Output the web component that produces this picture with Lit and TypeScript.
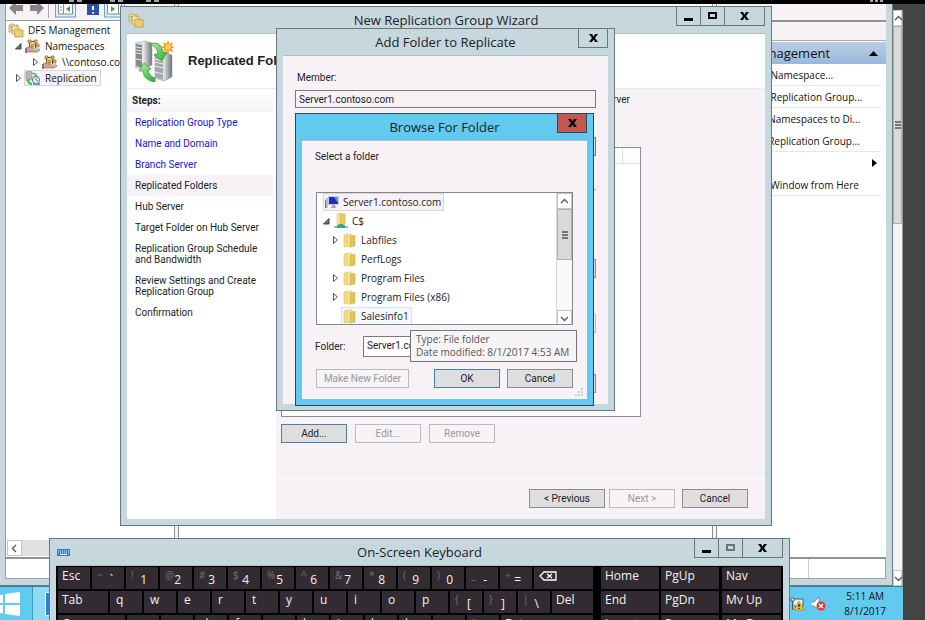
import { LitElement, html, css, nothing } from "lit";
import { customElement, property } from "lit/decorators.js";
import { classMap } from "lit/directives/class-map.js";

/* ---------- icons ---------- */

const folderIcon = html`<svg width="14" height="15" viewBox="0 0 14 15" aria-hidden="true">
  <path d="M1 2 L5 1 L6 2 L6 13 L1 14 Z" fill="#f3dc7c" stroke="#d9c06a" stroke-width=".6"/>
  <path d="M5 2 L8 0.500 L9 2 V12 L6 14.500 L5 13 Z" fill="#fbf0b4" stroke="#dcc468" stroke-width=".6"/>
  <path d="M7 3 L12 2.500 V13 L7 14 Z" fill="#e5c355" stroke="#cfae48" stroke-width=".6"/>
  <rect x="10.500" y="9" width="1.400" height="3" fill="#9fc4a4"/></svg>`;

const driveIcon = html`<svg width="14" height="16" viewBox="0 0 14 16" aria-hidden="true">
  <path d="M3 1 L7 0 V12 L3 12 Z" fill="#f8e9a0" stroke="#d9c06a" stroke-width=".6"/>
  <path d="M6 1 L11 1 V11 L6 12 Z" fill="#e9ca60" stroke="#cfae48" stroke-width=".6"/>
  <rect x="0" y="13" width="14" height="2" fill="#9fb9b0"/>
  <path d="M5 11 h4 v1 h2 v3 h-8 v-3 h2 z" fill="#2fae7c"/></svg>`;

const computerIcon = html`<svg width="14" height="13" viewBox="0 0 14 13" aria-hidden="true">
  <rect x="0" y="4" width="2" height="8" fill="#4c8a5c"/><rect x="1" y="2" width="2" height="9" fill="#b5bcc0"/>
  <rect x="3" y="0" width="11" height="9" fill="#c3ccd8"/><rect x="4" y="1" width="9" height="7" fill="#1c2fb8"/>
  <path d="M9 1 H13 V7 Z" fill="#6f8fe8"/><path d="M7 9 H10 L11 12 H6 Z" fill="#a5aab0"/></svg>`;

const foldersIcon = html`<svg width="16" height="15" viewBox="0 0 16 15" aria-hidden="true">
  <path d="M1 2 L2 1 H5 L6 2 H10 V9 H1 Z" fill="#f2dc90" stroke="#c0a050" stroke-width=".8"/>
  <path d="M4 4 l1 -1 H8 l1 1 H11 V11 H4 Z" fill="#f8ecb8" stroke="#c0a050" stroke-width=".8"/>
  <path d="M6 7 l1 -1 H10 l1 1 H15 V14 H7 Z" fill="#f0cf70" stroke="#b89445" stroke-width=".8"/>
  <path d="M2 4 h3 M3 6 l2 2" stroke="#6fa58a" stroke-width="1"/></svg>`;

const namespaceIcon = html`<svg width="16" height="15" viewBox="0 0 16 15" aria-hidden="true">
  <path d="M3 1 h3 v3 h-3 z M9 1 h3 v3 h-3 z M11 5 h3 v3 h-3 z M6 5 h3 v3 h-3 z" fill="#f0b040" stroke="#9a6a2c" stroke-width=".7"/>
  <path d="M4.500 4 V8 M6 2.500 H9 M10.500 4 V9" stroke="#5d5240" stroke-width="1" fill="none"/>
  <path d="M1 9 l2 -1 h4 l2 2 h5 l1 1 -3 2 H5 L1 13 Z" fill="#dba184" stroke="#9c6a58" stroke-width=".7"/>
  <path d="M0 9 h2 v5 h-2 z" fill="#5c86aa"/>
  <path d="M9 9 h5 v2 h-5 z" fill="#a9cbe6"/></svg>`;

const replicationIcon = html`<svg width="16" height="15" viewBox="0 0 16 15" aria-hidden="true">
  <path d="M1 1 L5 0 L7 1 V8 L3 9 L1 8 Z" fill="#b4b9bd" stroke="#84898d" stroke-width=".7"/>
  <path d="M7 2 Q12 1 12 5 L14 5 L11 8 L8 5 L10 5 Q10 3 7 3 Z" fill="#5cc552"/>
  <path d="M3 8 L6 9 L4 10 Q5 12 7 12 L7 14 Q3 14 2 10 L1 10 Z" fill="#46b848"/>
  <circle cx="11" cy="9" r="3.6" fill="#e4eff8" stroke="#4b6e8c" stroke-width=".9"/>
  <path d="M11 7 v2 l2 1" stroke="#3a5268" fill="none" stroke-width=".8"/>
  <rect x="8" y="12" width="7" height="2" fill="#7c94a6"/></svg>`;

const serversIcon = html`<svg width="40" height="42" viewBox="0 0 40 42" aria-hidden="true">
  <defs><linearGradient id="metal" x1="0" x2="1"><stop offset="0" stop-color="#d3d6d9"/><stop offset=".5" stop-color="#e4e6e8"/><stop offset="1" stop-color="#6e7378"/></linearGradient>
  <linearGradient id="leaf" x1="0" x2="1" y2="1"><stop offset="0" stop-color="#b6ecae"/><stop offset="1" stop-color="#2cae2c"/></linearGradient></defs>
  <path d="M0 3 L10 1 L17 3 V25 L7 30 L0 27 Z" fill="url(#metal)" stroke="#a4a8ac" stroke-width=".6"/>
  <path d="M1 4 L7 5 V28 L1 26 Z" fill="#85898e"/>
  <path d="M1 7 L7 8 M1 10 L7 11 M1 13 L7 14 M1 19 L7 20" stroke="#e6e8ea" stroke-width="1"/>
  <path d="M20 14 L29 12 L37 15 V37 L29 41 L20 38 Z" fill="url(#metal)" stroke="#989ca0" stroke-width=".6"/>
  <path d="M20 15 L28 17 V40 L20 37 Z" fill="#a4a8ac"/>
  <path d="M20 19 L28 21 M20 22 L28 24 M20 26 L28 28 M20 32 L28 34" stroke="#eceeef" stroke-width="1"/>
  <path d="M14 4 Q27 0 28 13 L32 12 L27 21 L19 15 L23 14 Q22 6 14 4 Z" fill="url(#leaf)" stroke="#2d9c2d" stroke-width=".7"/>
  <path d="M4 31 L9 23 L16 29 L13 30 Q14 36 20 38 V42 Q8 40 8 31 Z" fill="url(#leaf)" stroke="#2d9c2d" stroke-width=".7"/>
  <path d="M33 0 L34.500 4 L38 2 L36.500 6 L40 7 L36.500 8.500 L38.500 12 L34.500 10.500 L33 14 L31.500 10.500 L28 12 L29.500 8.500 L26 7 L29.500 5.500 L28 2 L31.500 4 Z" fill="#f29a24"/>
  <circle cx="33" cy="7" r="3" fill="#ffc94d"/></svg>`;

const keyboardIcon = html`<svg width="13" height="7" viewBox="0 0 13 7" aria-hidden="true">
  <rect width="13" height="7" fill="#2c7fd2"/>
  <path d="M1 2 h11 M1 4 h11" stroke="#e4f1fc" stroke-width="1" stroke-dasharray="1 1"/>
  <path d="M3 5.500 h7" stroke="#e4f1fc" stroke-width="1"/></svg>`;

const openArrow = html`<svg width="7" height="7" viewBox="0 0 7 7" aria-hidden="true"><path d="M6 0.500 V6 H0.500 Z" fill="#777" stroke="#222" stroke-width=".8"/></svg>`;
const closedArrow = html`<svg width="7" height="8" viewBox="0 0 7 8" aria-hidden="true"><path d="M1.500 0.500 L5.500 4 L1.500 7.500 Z" fill="#fff" stroke="#555"/></svg>`;

const chevron = (d: string) => html`<svg width="9" height="9" viewBox="0 0 9 9" aria-hidden="true"><path d=${d} fill="none" stroke="#555" stroke-width="1.300"/></svg>`;
const chevronUp = chevron("M1 6 L4.500 2.500 L8 6");
const chevronDown = chevron("M1 3 L4.500 6.500 L8 3");
const chevronLeft = chevron("M6 1 L2.500 4.500 L6 8");
const grip = html`<svg width="6" height="8" viewBox="0 0 6 8" aria-hidden="true"><path d="M0 1 H6 M0 4 H6 M0 7 H6" stroke="#555" stroke-width="1.600"/></svg>`;

const closeGlyph = html`<svg width="9" height="8" viewBox="0 0 9 8" aria-hidden="true"><path d="M0 0 H3 L4.500 2.500 L6 0 H9 L6 4 L9 8 H6 L4.500 5.500 L3 8 H0 L3 4 Z" fill="#000"/></svg>`;
const minGlyph = html`<svg width="10" height="9" viewBox="0 0 10 9" aria-hidden="true"><rect x="0" y="6" width="9" height="3" fill="#000"/></svg>`;
const maxGlyph = html`<svg width="9" height="8" viewBox="0 0 9 8" aria-hidden="true"><rect x="1" y="1" width="7" height="5" fill="none" stroke="currentColor" stroke-width="2"/></svg>`;

/* ---------- window frame ---------- */

@customElement("app-window")
export class AppWindow extends LitElement {
  @property() caption = "";
  @property() buttons: "all" | "close" | "dimmed" = "all";
  @property({ type: Boolean, reflect: true }) active = false;

  static styles = css`
    :host {
      --frame: #c7d7de;
      --line: #68777e;
      display: flex;
      flex-direction: column;
      box-sizing: border-box;
      border: 1px solid var(--line);
      background: var(--frame);
      padding: 0 6px 6px;
      font: 13px/20px "Open Sans", "Noto Sans", sans-serif;
      color: #1b2226;
    }
    :host([active]) {
      --frame: #62caef;
      --line: #22495c;
    }
    .bar {
      display: grid;
      grid-template-columns: 1fr auto 1fr;
      height: 26px;
      flex: none;
    }
    .icon {
      display: flex;
      align-items: center;
      padding-left: 1px;
    }
    .title {
      margin: 0;
      padding-top: 3px;
      font: inherit;
    }
    .controls {
      display: flex;
      justify-self: end;
      align-items: start;
    }
    button {
      display: grid;
      place-items: center;
      box-sizing: border-box;
      height: 19px;
      width: 24px;
      padding: 0;
      border: 1px solid var(--line);
      border-top: 0;
      border-right: 0;
      background: none;
      color: #000;
    }
    .close {
      width: 41px;
      border-right: 1px solid var(--line);
    }
    .small {
      width: 30px;
    }
    .red {
      background: #c45850;
    }
    .dim {
      color: #6b767b;
    }
    .body {
      flex: 1;
      min-height: 0;
      display: flex;
      flex-direction: column;
      border-top: 1px solid #b3c0c6;
      background: #f6f2f6;
    }
  `;

  render() {
    const only = this.buttons === "close";
    return html`
      <header class="bar">
        <span class="icon"><slot name="icon"></slot></span>
        <h1 class="title">${this.caption}</h1>
        <span class="controls">
          ${only
            ? nothing
            : html`<button aria-label="Minimize">${minGlyph}</button>
                <button class=${classMap({ dim: this.buttons === "dimmed" })} aria-label="Maximize">${maxGlyph}</button>`}
          <button class=${classMap({ close: true, small: only, red: this.active })} aria-label="Close">${closeGlyph}</button>
        </span>
      </header>
      <div class="body"><slot></slot></div>
    `;
  }
}

/* ---------- data ---------- */

interface Step { label: string; state?: "done" | "current"; }
const steps: Step[] = [
  { label: "Replication Group Type", state: "done" },
  { label: "Name and Domain", state: "done" },
  { label: "Branch Server", state: "done" },
  { label: "Replicated Folders", state: "current" },
  { label: "Hub Server" },
  { label: "Target Folder on Hub Server" },
  { label: "Replication Group Schedule and Bandwidth" },
  { label: "Review Settings and Create Replication Group" },
  { label: "Confirmation" },
];

const actions = [
  { label: "New Namespace...", rule: true },
  { label: "New Replication Group...", rule: true },
  { label: "Add Namespaces to Di...", rule: false },
  { label: "Add Replication Group...", rule: true },
  { label: "View", rule: false, sub: true },
  { label: "New Window from Here", rule: true },
];

interface Key { main: string; shift?: string; size?: string; }
const chars = (list: string): Key[] => list.split(" ").map((main) => ({ main }));
const pairs = (list: string): Key[] => list.split(" ").map((p) => ({ shift: p[0], main: p[1] }));

const mainRows: Key[][] = [
  [{ main: "Esc" }, ...pairs("~` !1 @2 #3 $4 %5 ^6 &7 *8 (9 )0 _- +="), { main: "⌫", size: "grow" }],
  [{ main: "Tab", size: "tab" }, ...chars("q w e r t y u i o p"), ...pairs("{[ }] |\\"), { main: "Del", size: "grow" }],
  [{ main: "Caps", size: "caps" }, ...chars("a s d f g h j k l"), ...pairs(":; \"'"), { main: "Enter", size: "grow" }],
];
const padRows = [
  ["Home", "PgUp", "Nav"],
  ["End", "PgDn", "Mv Up"],
  ["Insert", "Pause", "Mv Dn"],
];

/* ---------- application ---------- */

@customElement("app-root")
export class AppRoot extends LitElement {
  static styles = css`
    :host {
      display: flex;
      flex-direction: column;
      position: relative;
      height: 100vh;
      overflow: hidden;
      background: #444;
      font: 10px/16px "Open Sans", "Noto Sans", sans-serif;
      color: #111;
    }
    * { box-sizing: border-box; }
    ul, ol { list-style: none; margin: 0; padding: 0; }
    p, h2 { margin: 0; }
    button, input { font: inherit; color: inherit; border-radius: 0; }
    svg { display: block; flex: none; }

    .strip { height: 4px; flex: none; background: #000; }
    .session { flex: 1; min-height: 0; display: grid; grid-template-columns: minmax(0, 1fr) 10px 22px; grid-template-rows: minmax(0, 1fr) 34px; }
    .arrow { display: grid; place-items: center; padding: 0; border: 1px solid #c4c4c4; background: #fff; }

    /* console window */
    .console { display: flex; flex-direction: column; background: #c7d7de; padding: 0 6px 6px 5px; border-right: 1px solid #6d7a80; border-bottom: 1px solid #6d7a80; }
    .panes { flex: 1; min-height: 0; display: grid; grid-template-columns: 169px 5px minmax(0, 1fr) 5px 169px; border-bottom: 2px solid #8f9498; background: #fff; }
    .nav { display: flex; flex-direction: column; min-width: 0; border-left: 1px solid #8e9ba1; }
    .tools { display: flex; gap: 4px; align-items: end; height: 17px; overflow: hidden; padding-left: 3px; background: #f6f2f6; border-bottom: 1px solid #999; }
    .split { background: #f6f2f6; border: 1px solid #8e8e8e; border-width: 0 1px; }
    .tree { flex: 1; padding-top: 1px; }
    .row { display: flex; align-items: center; height: 16px; white-space: nowrap; }
    .row .tag { display: flex; align-items: center; gap: 4px; height: 16px; border: 1px solid transparent; padding-right: 3px; }
    .row .tag.on { background: #f6f2f6; border-color: #d8d4d8; }
    .twist { width: 12px; display: grid; justify-items: center; }
    .d0 { padding-left: 1px; }
    .d1 { padding-left: 6px; }
    .d2 { padding-left: 23px; }
    .hscroll { display: flex; height: 16px; background: #e0e0e0; margin: 0 0 1px 1px; }
    .hscroll .arrow { width: 15px; }
    .status { display: grid; grid-template-columns: 1fr 77px; height: 20px; background: #fff; border: 1px solid #9aa4a8; border-top: 0; }
    .status span + span { border-left: 1px solid #ccc; }
    .actions { display: flex; flex-direction: column; min-width: 0; }
    .actions .tools { height: 18px; border-bottom: 2px solid #8f9094; }
    .panel { height: 19px; background: #f6f2f6; border-bottom: 1px solid #aaa; }
    .group { display: flex; justify-content: space-between; align-items: center; height: 22px; margin-top: 1px; padding: 0 8px 0 6px; background: linear-gradient(#b9cfe8, #9ab6d8); font-size: 13px; }
    .actions li { display: flex; align-items: center; justify-content: space-between; height: 22px; margin-right: 5px; padding: 0 4px 0 30px; border-bottom: 1px solid transparent; white-space: nowrap; }
    .actions li.rule { border-color: #e6e6e6; }

    .vscroll { display: flex; flex-direction: column; margin-top: 6px; background: #f4f2f4; border-right: 1px solid #999; }
    .vscroll .arrow { height: 16px; border-color: #ccc; }
    .thumb { display: grid; place-items: center; background: #dadada; border: 1px solid #b0b0b0; }
    .session-thumb { flex: 0 0 198px; }
    .spacer { flex: 1; }

    .taskbar { grid-column: 1 / 3; display: flex; align-items: stretch; background: #62caef; border-top: 1px solid #48788c; }
    .start { display: grid; place-items: center start; width: 32px; padding: 0; border: 0; background: none; }
    .task { width: 60px; padding: 0 0 0 12px; border: 0; border-left: 1px solid #3a9cc4; background: #8edaf5; }
    .tray { display: flex; align-items: center; gap: 7px; margin-left: auto; padding-right: 17px; }
    .clock { margin-left: 11px; line-height: 15px; text-align: center; }

    /* floating windows */
    app-window { position: absolute; }
    .wizard { left: 120px; top: 6px; width: 652px; height: 520px; }
    .add { left: 276px; top: 28px; width: 339px; height: 383px; }
    .browse { left: 295px; top: 113px; width: 299px; height: 293px; }
    .osk { left: 49px; top: 538px; width: 741px; height: 160px; }
    .form { font: 10px/14px Roboto, "Liberation Sans", sans-serif; }

    .btn { height: 19px; width: 66px; padding: 0; border: 1px solid #8c8a8c; background: #dfdedf; text-align: center; line-height: 16px; }
    .btn.wide { width: 76px; }
    .btn.make { width: 93px; }
    .btn.primary { border-color: #4c7ca8; }
    .btn:disabled { border-color: #bcbabc; background: #f6f4f6; color: #9a989a; }

    .banner { display: flex; align-items: center; gap: 13px; height: 55px; padding-left: 8px; background: #fff; border-bottom: 1px solid #eceaec; }
    .banner h2 { font: bold 13px/16px "Liberation Sans", sans-serif; }
    .split-body { flex: 1; min-height: 0; display: grid; grid-template-columns: 149px minmax(0, 1fr); }
    .steps { background: #fff; padding-top: 2px; }
    .steps h2 { height: 21px; padding: 2px 5px; margin-right: 3px; background: linear-gradient(#fff, #f6f2f6); font-size: 10px; line-height: 16px; }
    .steps li { padding: 5px 6px 5px 8px; margin-right: 3px; line-height: 11px; }
    .steps li.current { background: #f6f2f6; }
    .steps a { color: #1a12d8; text-decoration: none; }
    .page { display: flex; flex-direction: column; min-width: 0; }
    .hint { width: 354px; height: 58px; padding-top: 4px; text-align: right; }
    .grid { width: 360px; height: 270px; margin-left: 5px; border: 1px solid #8b8c94; background: #fff; }
    .grid table { width: 100%; border-collapse: collapse; }
    .grid th { height: 15px; border-bottom: 1px solid #ddd; border-right: 1px solid #ddd; padding: 0; }
    .grid th:last-child { width: 18px; border-right: 0; }
    .row-buttons { display: flex; gap: 8px; padding: 7px 5px 0; }
    .wizard-foot { display: flex; justify-content: flex-end; gap: 4px; margin-top: auto; padding: 10px 17px 11px 0; border-top: 1px solid #fff; }
    .wizard-foot .btn:last-child { margin-left: 3px; }

    .field { border: 1px solid #7c7a7c; padding: 0 3px; outline: 0; }
    .add-body { padding: 15px 12px 0; display: flex; flex-direction: column; }
    .add-body label { padding: 0 2px; }
    .add-body .field { height: 18px; margin-top: 5px; background: #f6f2f6; }
    .peek { display: grid; justify-items: end; align-items: start; grid-template-rows: 52px 70px 55px 60px 19px; padding-top: 29px; }
    .peek hr { width: 100%; height: 1px; margin: 0; border: 0; background: #aaa; }

    .browse-body { display: flex; flex-direction: column; padding: 9px 14px 0 13px; }
    .listbox { display: grid; grid-template-columns: minmax(0, 1fr) 16px; height: 133px; margin: 28px 0 0 1px; border: 1px solid #828790; background: #fff; overflow: hidden; font: 10px/16px "Open Sans", "Noto Sans", sans-serif; }
    .listbox .row { height: 19px; align-items: start; }
    .listbox .tag { height: 18px; gap: 4px; padding: 0 2px 0 1px; }
    .listbox .twist { height: 18px; align-items: center; }
    .listbox .tag.hot { border-color: #cfe4f6; background: #f6faff; }
    .b0 { padding-left: 6px; }
    .b1 { padding-left: 3px; }
    .b2 { padding-left: 12px; }
    .listbox .scroll { display: flex; flex-direction: column; border-left: 1px solid #d8d8d8; background: #fafafa; }
    .listbox .arrow { height: 16px; }
    .listbox .thumb { height: 51px; }
    .folder { display: grid; grid-template-columns: 48px 1fr; align-items: center; margin-top: 11px; }
    .folder .field { width: 100%; height: 21px; background: #fff; padding-bottom: 2px; }
    .browse-foot { display: flex; gap: 7px; margin: 12px 0 0 1px; }
    .browse-foot .make { margin-right: auto; }
    .sizer { align-self: flex-end; margin: 0 -10px 0 0; }

    .tooltip { position: absolute; left: 410px; top: 330px; padding: 2px 7px 2px 5px; border: 1px solid #767676; background: #f7f4f7; color: #555; line-height: 13px; white-space: nowrap; }

    /* on-screen keyboard */
    .keys { display: grid; grid-template-columns: minmax(0, 1fr) 121px 59px; gap: 2px 0; background: #000; padding: 1px 2px; flex: 1; align-content: start; color: #f2f0f2; }
    .keyrow { display: flex; gap: 2px; padding-right: 8px; }
    .keyrow.pad { padding-right: 3px; }
    .keyrow.last { padding-right: 0; }
    .key { display: flex; flex: 0 0 32px; height: 22px; padding: 0 0 0 4px; border: 0; background: #322c32; font-size: 12px; line-height: 18px; text-align: left; }
    .key.letter { padding-left: 6px; }
    .key.pair { justify-content: space-between; padding: 0 11px 0 5px; line-height: 26px; }
    .key.pair sup { font-size: 10px; line-height: 16px; vertical-align: baseline; color: #77717a; }
    .key.tab { flex-basis: 50px; }
    .key.caps { flex-basis: 67px; }
    .key.grow { flex: 1; }
    .back { margin: 4px 0 0 1px; }
  `;

  private key(k: Key) {
    const cls = classMap({ key: true, pair: !!k.shift, letter: !k.shift && k.main.length === 1 && k.main !== "⌫", [k.size ?? "unit"]: true });
    if (k.main === "⌫")
      return html`<button class=${cls} aria-label="Backspace"><svg class="back" width="18" height="10" viewBox="0 0 18 10">
        <path d="M5 1 H17 V9 H5 L1 5 Z" fill="none" stroke="#fff" stroke-width="1.300"/><path d="M8 3 L13 7 M13 3 L8 7" stroke="#fff" stroke-width="1.500"/></svg></button>`;
    return html`<button class=${cls}>${k.shift ? html`<sup>${k.shift}</sup>` : nothing}<span>${k.main}</span></button>`;
  }

  private node(depth: string, arrow: unknown, icon: unknown, label: string, mark = "") {
    return html`<li class="row ${depth}">
      ${arrow === null ? nothing : html`<span class="twist">${arrow}</span>`}
      <span class="tag ${mark}">${icon}<span>${label}</span></span>
    </li>`;
  }

  private console() {
    return html`<main class="console">
      <div class="panes">
        <nav class="nav">
          <div class="tools">
            <svg width="116" height="16" viewBox="0 0 116 16" aria-hidden="true">
              <path d="M0 4 L7 -3 V1 H14 V7 H7 V11 Z M35 4 L28 -3 V1 H21 V7 H28 V11 Z" fill="#85858a"/>
              <path d="M39.500 0 V14" stroke="#aaa"/>
              <rect x="46.500" y="-5" width="20" height="18" fill="#dff0fa" stroke="#5aa9d6"/>
              <rect x="49.500" y="-4" width="14" height="14" fill="#fff" stroke="#7e8a94"/><path d="M54.500 0 V10 M51 3 h2 M51 6 h2" stroke="#7e8a94"/><path d="M61 2 V8 L57 5 Z" fill="#3ea83e"/>
              <rect x="78" y="-2" width="12" height="13" fill="#2b52a8"/><path d="M84 2 v4 M84 8 v1.500" stroke="#fff" stroke-width="2"/>
              <rect x="95.500" y="-5" width="20" height="18" fill="#dff0fa" stroke="#5aa9d6"/>
              <rect x="98.500" y="-4" width="14" height="14" fill="#fff" stroke="#7e8a94"/><path d="M102 2 V8 L106 5 Z" fill="#3ea83e"/><path d="M109.500 0 V10" stroke="#7e8a94"/>
            </svg>
          </div>
          <ul class="tree">
            ${this.node("d0", null, foldersIcon, "DFS Management")}
            ${this.node("d1", openArrow, namespaceIcon, "Namespaces")}
            ${this.node("d2", closedArrow, namespaceIcon, "\\\\contoso.com\\Public")}
            ${this.node("d1", closedArrow, replicationIcon, "Replication", "on")}
          </ul>
          <div class="hscroll"><button class="arrow" aria-label="Scroll left">${chevronLeft}</button></div>
        </nav>
        <div class="split"></div>
        <div></div>
        <div class="split"></div>
        <aside class="actions">
          <div class="tools"></div>
          <div class="panel"></div>
          <div class="group"><span>DFS Management</span>
            <svg width="9" height="5" viewBox="0 0 9 5"><path d="M0 5 L4.500 0 L9 5 Z" fill="#000"/></svg></div>
          <ul>${actions.map((a) => html`<li class=${classMap({ rule: a.rule })}><span>${a.label}</span>
            ${a.sub ? html`<svg width="5" height="8" viewBox="0 0 5 8"><path d="M0 0 L5 4 L0 8 Z" fill="#000"/></svg>` : nothing}</li>`)}</ul>
        </aside>
      </div>
      <div class="status"><span></span><span></span></div>
    </main>`;
  }

  private wizard() {
    return html`<app-window class="wizard" caption="New Replication Group Wizard">
      <span slot="icon">${foldersIcon}</span>
      <div class="banner">${serversIcon}<h2>Replicated Folders</h2></div>
      <div class="split-body form">
        <section class="steps">
          <h2>Steps:</h2>
          <ol>${steps.map((s) => html`<li class=${s.state ?? "todo"}>${s.state === "done" ? html`<a href="#">${s.label}</a>` : s.label}</li>`)}</ol>
        </section>
        <section class="page">
          <p class="hint">Replicated folders on branch server</p>
          <div class="grid"><table><thead><tr><th></th><th></th></tr></thead></table></div>
          <div class="row-buttons">
            <button class="btn primary">Add...</button>
            <button class="btn" disabled>Edit...</button>
            <button class="btn" disabled>Remove</button>
          </div>
          <footer class="wizard-foot">
            <button class="btn wide">&lt; Previous</button>
            <button class="btn" disabled>Next &gt;</button>
            <button class="btn">Cancel</button>
          </footer>
        </section>
      </div>
    </app-window>`;
  }

  private addDialog() {
    return html`<app-window class="add" caption="Add Folder to Replicate" buttons="close">
      <div class="add-body form">
        <label for="member">Member:</label>
        <input id="member" class="field" readonly value="Server1.contoso.com" />
        <div class="peek">
          <button class="btn primary" aria-label="Browse"></button>
          <hr />
          <button class="btn" aria-label="Permissions"></button>
          <button class="btn" disabled aria-label="OK"></button>
          <button class="btn" aria-label="Cancel"></button>
        </div>
      </div>
    </app-window>`;
  }

  private browseDialog() {
    return html`<app-window class="browse" caption="Browse For Folder" buttons="close" active>
      <div class="browse-body form">
        <p>Select a folder</p>
        <div class="listbox">
          <ul>
            ${this.node("b0", null, computerIcon, "Server1.contoso.com", "on")}
            ${this.node("b1", openArrow, driveIcon, "C$")}
            ${this.node("b2", closedArrow, folderIcon, "Labfiles")}
            ${this.node("b2", nothing, folderIcon, "PerfLogs")}
            ${this.node("b2", closedArrow, folderIcon, "Program Files")}
            ${this.node("b2", closedArrow, folderIcon, "Program Files (x86)")}
            ${this.node("b2", nothing, folderIcon, "Salesinfo1", "hot")}
          </ul>
          <div class="scroll">
            <button class="arrow" aria-label="Scroll up">${chevronUp}</button>
            <div class="thumb">${grip}</div>
            <span class="spacer"></span>
            <button class="arrow" aria-label="Scroll down">${chevronDown}</button>
          </div>
        </div>
        <div class="folder"><label for="folder">Folder:</label><input id="folder" class="field" value="Server1.contoso.com" /></div>
        <div class="browse-foot">
          <button class="btn make" disabled>Make New Folder</button>
          <button class="btn primary">OK</button>
          <button class="btn">Cancel</button>
        </div>
        <svg class="sizer" width="8" height="8" viewBox="0 0 8 8" aria-hidden="true">
          <path d="M6 0h2v2h-2z M3 3h2v2h-2z M6 3h2v2h-2z M0 6h2v2h-2z M3 6h2v2h-2z M6 6h2v2h-2z" fill="#d0ccd0"/></svg>
      </div>
    </app-window>
    <div class="tooltip" role="tooltip">Type: File folder<br />Date modified: 8/1/2017 4:53 AM</div>`;
  }

  private keyboard() {
    return html`<app-window class="osk" caption="On-Screen Keyboard" buttons="dimmed">
      <span slot="icon">${keyboardIcon}</span>
      <div class="keys">
        ${mainRows.map((row, i) => html`
          <div class="keyrow">${row.map((k) => this.key(k))}</div>
          <div class="keyrow pad">${padRows[i].slice(0, 2).map((main) => this.key({ main, size: "grow" }))}</div>
          <div class="keyrow last">${this.key({ main: padRows[i][2], size: "grow" })}</div>`)}
      </div>
    </app-window>`;
  }

  render() {
    return html`
      <div class="strip"><svg width="100%" height="4" aria-hidden="true">
        <path d="M69 1h5 M77 1h5 M110 1h5 M118 1h5 M146 1h5 M154 1h5 M870 1h3 M875 1h3 M880 1h3" stroke="#ddd" stroke-width="1.500"/></svg></div>
      <div class="session">
        ${this.console()}
        <div class="vscroll">
          <button class="arrow" aria-label="Scroll up">${chevronUp}</button>
          <div class="thumb session-thumb">${grip}</div>
          <span class="spacer"></span>
          <button class="arrow" aria-label="Scroll down">${chevronDown}</button>
        </div>
        <span></span>
        <footer class="taskbar">
          <button class="start" aria-label="Start"><svg width="21" height="24" viewBox="0 0 21 24">
            <path d="M0 3 L3 2.500 V11 H0 Z M5 2 L20 0 V11 H5 Z M0 13 H3 V21.500 L0 21 Z M5 13 H20 V24 L5 22 Z" fill="#fff"/></svg></button>
          <button class="task" aria-label="Server Manager"><svg width="20" height="24" viewBox="0 0 20 24"><rect x=".5" y=".5" width="19" height="23" fill="#2c7fd2" stroke="#fff"/></svg></button>
          <div class="tray">
            <svg width="14" height="14" viewBox="0 0 14 14" aria-hidden="true">
              <path d="M4 2 H13 V9 H4" fill="#dff3fb" stroke="#44606c"/><path d="M1 1 h3 v3 h-3 z M2.500 4 V13" stroke="#44606c" fill="#fff"/>
              <path d="M9 4 L14 13 H4 Z" fill="#f8c21c" stroke="#a77c00" stroke-width=".6"/><path d="M9 7 v3 M9 11 v1" stroke="#000" stroke-width="1.200"/></svg>
            <svg width="15" height="14" viewBox="0 0 15 14" aria-hidden="true">
              <path d="M0 5 H3 L8 0 V13 L3 9 H0 Z" fill="#fff" stroke="#6b8590" stroke-width=".8"/>
              <circle cx="10" cy="9" r="4.500" fill="#dd3b2e"/><path d="M8 7 L12 11 M12 7 L8 11" stroke="#fff" stroke-width="1.400"/></svg>
            <div class="clock">5:11 AM<br />8/1/2017</div>
          </div>
        </footer>
      </div>
      ${this.wizard()} ${this.addDialog()} ${this.browseDialog()} ${this.keyboard()}
    `;
  }
}
